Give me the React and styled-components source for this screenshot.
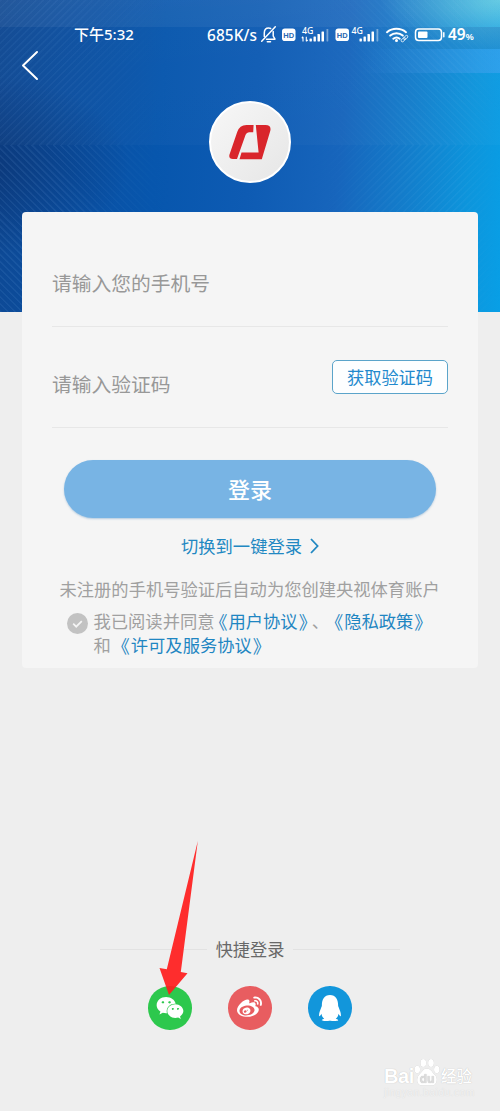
import React from "react";
import styled, { createGlobalStyle } from "styled-components";
import { FaWeixin, FaWeibo, FaQq } from "react-icons/fa";

const Global = createGlobalStyle`
  *, *::before, *::after { box-sizing: border-box; }
  body {
    margin: 0;
    background: #eeeeee;
    font-family: "Noto Sans", "Noto Sans CJK SC", sans-serif;
  }
  button { font: inherit; border: 0; padding: 0; background: none; }
`;

const Screen = styled.main`
  position: relative;
  width: 500px;
  height: 1111px;
  overflow: hidden;
  background: #eeeeee;
  font-family: "Noto Sans CJK SC", sans-serif;
  display: flex;
  flex-direction: column;
`;

const Hero = styled.header`
  position: relative;
  flex: none;
  height: 312px;
  display: flex;
  flex-direction: column;
  color: #fff;
  background:
    linear-gradient(rgba(255, 255, 255, 0.06), rgba(255, 255, 255, 0.05)) 0 0 / 100% 27px no-repeat,
    linear-gradient(90deg, transparent 72%, rgba(110, 170, 255, 0.3)) 0 49px / 100% 24px no-repeat,
    linear-gradient(90deg, transparent 70%, rgba(60, 130, 190, 0.4)) 0 27px / 100% 22px no-repeat,
    linear-gradient(rgba(255, 255, 255, 0.03), rgba(255, 255, 255, 0.02)) 0 0 / 100% 145px no-repeat,
    radial-gradient(ellipse 120px 48px at 500px 0, rgba(150, 235, 225, 0.55), transparent),
    radial-gradient(ellipse 150px 90px at -20px 165px, rgba(8, 36, 90, 0.45), transparent),
    linear-gradient(95deg, #0e4791 0%, #0b4e9f 14%, #0756ad 32%, #0e5bb3 50%, #1765bc 67%, #137dcb 80%, #0d95dc 92%, #089fe6 100%);

  &::before {
    content: "";
    position: absolute;
    inset: 0;
    background:
      repeating-linear-gradient(135deg, rgba(150, 200, 255, 0.06) 0 1px, transparent 2px 5px) 0 0 / 250px 145px no-repeat,
      repeating-linear-gradient(45deg, rgba(150, 200, 255, 0.09) 0 1px, transparent 2px 5px) 0 145px / 250px 167px no-repeat,
      repeating-linear-gradient(45deg, rgba(150, 210, 255, 0.05) 0 1px, transparent 2px 5px) 250px 0 / 250px 145px no-repeat,
      repeating-linear-gradient(135deg, rgba(150, 210, 255, 0.06) 0 1px, transparent 2px 5px) 250px 145px / 250px 167px no-repeat;
    mask-image: linear-gradient(90deg, #000 0, #000 12%, transparent 34%, transparent 62%, #000 82%, #000 92%, transparent);
  }
`;

const StatusBar = styled.div`
  position: relative;
  height: 27px;
  margin-top: 21px;
  padding: 0 24px 0 74px;
  display: flex;
  align-items: center;
  font: 500 15.4px/27px "Noto Sans", "Noto Sans CJK SC", sans-serif;
`;

const Clock = styled.span`
  width: 133px;
  font-size: 15px;
`;

const Speed = styled.span`
  width: 53px;
  padding-top: 1px;
  letter-spacing: 0.1px;
`;

const StatusIcons = styled.svg`
  flex: none;
  width: 187px;
  height: 27px;
`;

const Percent = styled.span`
  margin-left: 1px;
  padding-top: 1px;
  white-space: nowrap;
  font-weight: 600;
  small { font-size: 9.5px; }
`;

const BackButton = styled.button`
  position: relative;
  width: 20px;
  height: 34px;
  margin-left: 20px;
  display: flex;
  align-items: center;
  justify-content: center;
`;

const Logo = styled.div`
  position: relative;
  width: 82px;
  height: 82px;
  margin: 19px 0 0 209px;
  border: 2.5px solid #fff;
  border-radius: 50%;
  background: linear-gradient(135deg, #f7f7f7, #e6e6e6);
  display: grid;
  place-items: center;
`;

const Card = styled.section`
  position: relative;
  flex: none;
  height: 456px;
  margin: -100px 22px 0;
  padding: 0 30px;
  border-radius: 4px;
  background: #f5f5f5;
  display: flex;
  flex-direction: column;
`;

const Field = styled.label`
  display: flex;
  justify-content: space-between;
  height: ${(p) => p.$height}px;
  padding-top: ${(p) => p.$top}px;
  border-bottom: 1px solid #e7e7e7;
`;

const Placeholder = styled.span`
  font-size: 19.75px;
  line-height: 30px;
  color: #989898;
`;

const CodeButton = styled.button`
  width: 116px;
  height: 34px;
  margin-top: -9px;
  border: 1px solid #5ba4ca;
  border-radius: 5px;
  background: #fdfeff;
  color: #2289cd;
  font-size: 17.2px;
  line-height: 32px;
`;

const LoginButton = styled.button`
  height: 58px;
  margin: 32px 12px 0;
  border-radius: 29px;
  background: #78b4e4;
  box-shadow: 0 1px 2px rgba(80, 140, 190, 0.4);
  color: #fff;
  font-size: 22px;
  font-weight: 500;
  line-height: 56px;
  padding-bottom: 2px;
`;

const SwitchLink = styled.a`
  align-self: center;
  margin-top: 15px;
  height: 26px;
  display: flex;
  align-items: center;
  gap: 8px;
  color: #2288c2;
  font-size: 17.3px;
  line-height: 26px;
`;

const Notice = styled.p`
  margin: 17px 0 0 7.5px;
  color: #a0a0a0;
  font-size: 17.3px;
  line-height: 26px;
  white-space: nowrap;
`;

const Agreement = styled.div`
  display: flex;
  align-items: flex-start;
  gap: 5.5px;
  margin: 7px -10px 0 15px;
  color: #a0a0a0;
  font-size: 17.3px;
  line-height: 24px;
  white-space: nowrap;
`;

const CheckIcon = styled.svg`
  flex: none;
  width: 21px;
  height: 21px;
  margin-top: 4px;
`;

const AgreementLine = styled.div`
  display: flex;
  align-items: center;
`;

const Policy = styled.a`
  display: flex;
  margin-left: ${(p) => p.$gap || 0}px;
  color: #1f86c2;
`;

const Bracket = styled.span`
  width: 14px;
  padding: 0 1px;
  font-size: 18px;
  font-feature-settings: "halt";
  text-align: ${(p) => (p.$close ? "left" : "right")};
`;

const Comma = styled.span`
  width: 17px;
  font-feature-settings: "halt";
`;

const QuickTitle = styled.div`
  margin: 268px 100px 0;
  height: 26px;
  display: flex;
  align-items: center;
  gap: 9px;
  color: #686868;
  font-size: 17.2px;
  line-height: 26px;
  white-space: nowrap;

  &::before,
  &::after {
    content: "";
    flex: 1;
    height: 1px;
    background: #e2e2e2;
  }
`;

const Socials = styled.nav`
  margin: 24px 0 0 148px;
  display: flex;
  gap: 36px;
`;

const Social = styled.button`
  width: 43.5px;
  height: 43.5px;
  margin-right: 0.5px;
  border-radius: 50%;
  display: grid;
  place-items: center;
  color: #fff;
  font-size: ${(p) => p.$size}px;
  background: ${(p) => p.$color};
  svg { display: block; }
`;

const Pointer = styled.svg`
  position: absolute;
  left: 155px;
  top: 838px;
  width: 46px;
  height: 160px;
  pointer-events: none;
`;

const Watermark = styled.div`
  position: absolute;
  left: 384px;
  top: 1056px;
  width: 95px;
  color: #fff;
  text-shadow: 0 0 1px #b4b4b4;
  pointer-events: none;
`;

const WatermarkBrand = styled.div`
  display: flex;
  align-items: flex-end;
  height: 31px;
`;

const WatermarkLatin = styled.span`
  width: 30px;
  font: 700 20px/22px "Liberation Sans", sans-serif;
  letter-spacing: -0.4px;
`;

const WatermarkHan = styled.span`
  margin-left: 1px;
  font-size: 15.5px;
  font-weight: 500;
  line-height: 24px;
`;

const Paw = styled.svg`
  width: 26px;
  height: 30px;
  filter: drop-shadow(0 0 0.7px #b8b8b8);
`;

const WatermarkUrl = styled.div`
  color: #f2f2f2;
  font: 10px/12px "Liberation Sans", sans-serif;
  letter-spacing: 0.6px;
  text-shadow: 0 0 1px #d2d2d2;
`;

const Signal = ({ x }) => (
  <g fill="#fff">
    <rect x={x} y="17.5" width="2.4" height="3" rx="0.4" />
    <rect x={x + 4} y="15.5" width="2.4" height="5" rx="0.4" />
    <rect x={x + 8} y="13" width="2.5" height="7.5" rx="0.4" />
    <rect x={x + 12} y="10.5" width="2.5" height="10" rx="0.4" />
    <rect x={x + 17} y="8" width="1.8" height="12.5" rx="0.4" opacity="0.4" />
  </g>
);

const Hd = ({ x }) => (
  <g>
    <rect x={x} y="7.5" width="13.5" height="12.5" rx="2.8" fill="#fff" />
    <text x={x + 6.75} y="16.6" textAnchor="middle" fontFamily="Liberation Sans, sans-serif" fontSize="7.5" fontWeight="700" fill="#2b68b2">HD</text>
  </g>
);

const StatusGlyphs = () => (
  <StatusIcons viewBox="0 0 187 27">
    <g fill="none" stroke="#fff" strokeWidth="1.5" strokeLinecap="round" strokeLinejoin="round">
      <path d="M4.3 15.5V12c0-3 1.7-5 4.4-5 .8 0 1.4.2 2 .5M13.2 10.5V15l1.8 3.2H6.5" />
      <path d="M15.3 5.8 1.7 20.2" />
      <path d="M7.3 20.8h3.2" />
    </g>
    <Hd x={22} />
    <text x="42" y="12.8" fontFamily="Noto Sans, sans-serif" fontSize="8.8" fontWeight="500" fill="#fff">4G</text>
    <path d="M43 16v4.5M41.8 17.3 43 15.6M46.3 15.7v4.6M46.3 20.4l1.5-1.6" stroke="#fff" strokeWidth="1.1" fill="none" />
    <Signal x={49.5} />
    <Hd x={75.5} />
    <text x="91.5" y="12.8" fontFamily="Noto Sans, sans-serif" fontSize="8.8" fontWeight="500" fill="#fff">4G</text>
    <Signal x={99.5} />
    <g fill="none" stroke="#fff" strokeWidth="2" strokeLinecap="round">
      <path d="M127 11.2c5.3-4.6 13.7-4.6 19 0" />
      <path d="M130.2 14.6c3.6-3.1 9-3.1 12.6 0" />
      <path d="M133.3 17.7c1.9-1.5 4.5-1.5 6.4 0" />
    </g>
    <circle cx="136.5" cy="19.6" r="1.5" fill="#fff" />
    <g fill="none" stroke="#fff" strokeWidth="0.9" opacity="0.85">
      <ellipse cx="143.3" cy="18.7" rx="2.6" ry="1.4" transform="rotate(-45 143.3 18.7)" />
      <ellipse cx="145.7" cy="16.5" rx="2.6" ry="1.4" transform="rotate(-45 145.7 16.5)" />
    </g>
    <rect x="155.5" y="8" width="26" height="11.5" rx="3.2" fill="none" stroke="#fff" strokeWidth="1.5" />
    <rect x="158" y="10.5" width="9.5" height="6.5" rx="1" fill="#fff" />
    <path d="M183.8 11.8v4" stroke="#fff" strokeWidth="1.5" strokeLinecap="round" />
  </StatusIcons>
);

export default function App() {
  return (
    <Screen>
      <Global />
      <Hero>
        <StatusBar>
          <Clock>下午5:32</Clock>
          <Speed>685K/s</Speed>
          <StatusGlyphs />
          <Percent>49<small>%</small></Percent>
        </StatusBar>
        <BackButton aria-label="返回">
          <svg width="20" height="32" viewBox="0 0 20 32" fill="none" stroke="#fff" strokeWidth="2" strokeLinecap="round" strokeLinejoin="round">
            <path d="M17 3 3 16.5 17 30" />
          </svg>
        </BackButton>
        <Logo>
          <svg width="42" height="36" viewBox="0 0 42 36" fill="#d9252b">
            <path d="M17.5 1H24.6L24.2 8.2H20Q17.6 8.2 16.6 10.8L8 35H4Q-.7 35 .5 30.4L8.2 8Q10.5 1 17.5 1Z" />
            <path d="M26.8 1H36.5Q43 1 41.1 7.5L32.8 35.2H10.5L12.5 28.6H29.6Z" />
          </svg>
        </Logo>
      </Hero>

      <Card>
        <Field $height={115} $top={56}>
          <Placeholder>请输入您的手机号</Placeholder>
        </Field>
        <Field $height={101} $top={42}>
          <Placeholder>请输入验证码</Placeholder>
          <CodeButton>获取验证码</CodeButton>
        </Field>
        <LoginButton>登录</LoginButton>
        <SwitchLink>
          切换到一键登录
          <svg width="9" height="16" viewBox="0 0 9 16" fill="none" stroke="#2288c2" strokeWidth="1.8">
            <path d="M1 1 7.6 8 1 15" />
          </svg>
        </SwitchLink>
        <Notice>未注册的手机号验证后自动为您创建央视体育账户</Notice>
        <Agreement>
          <CheckIcon viewBox="0 0 21 21">
            <circle cx="10.5" cy="10.5" r="10.5" fill="#c2c2c2" />
            <path d="m6.2 10.7 3 3 5.6-5.6" fill="none" stroke="#f5f5f5" strokeWidth="1.7" />
          </CheckIcon>
          <div>
            <AgreementLine>
              我已阅读并同意
              <Policy>
                <Bracket>《</Bracket>用户协议<Bracket $close>》</Bracket>
              </Policy>
              <Comma>、</Comma>
              <Policy $gap={1.5}>
                <Bracket>《</Bracket>隐私政策<Bracket $close>》</Bracket>
              </Policy>
            </AgreementLine>
            <AgreementLine>
              和
              <Policy $gap={6}>
                <Bracket>《</Bracket>许可及服务协议<Bracket $close>》</Bracket>
              </Policy>
            </AgreementLine>
          </div>
        </Agreement>
      </Card>

      <QuickTitle>快捷登录</QuickTitle>
      <Socials>
        <Social $color="#2dc84d" $size={28} aria-label="微信"><FaWeixin /></Social>
        <Social $color="#e85d60" $size={25} aria-label="微博"><FaWeibo /></Social>
        <Social $color="#1296db" $size={26} aria-label="QQ"><FaQq /></Social>
      </Socials>

      <Pointer viewBox="155 838 46 160">
        <path d="M197.8 841 180.8 972 187.5 973.3 169 995 159.5 968 166.8 969.3Z" fill="#ff1c1c" fillOpacity="0.92" />
      </Pointer>

      <Watermark>
        <WatermarkBrand>
          <WatermarkLatin>Bai</WatermarkLatin>
          <Paw viewBox="0 0 26 30">
            <g fill="#fff">
              <ellipse cx="3.3" cy="12.5" rx="2.8" ry="3.8" />
              <ellipse cx="9.3" cy="6" rx="2.9" ry="4.1" />
              <ellipse cx="17" cy="6" rx="2.9" ry="4.1" />
              <ellipse cx="22.8" cy="12.5" rx="2.8" ry="3.8" />
              <path d="M13 11.5c4 0 5 4 8 6.5s2.5 10.5-3 10.5H8c-5.5 0-6-7.5-3-10.5s4-6.5 8-6.5Z" />
            </g>
            <text x="13" y="26" textAnchor="middle" fontFamily="Liberation Sans, sans-serif" fontWeight="700" fontSize="12" fill="#dcdcdc">du</text>
          </Paw>
          <WatermarkHan>经验</WatermarkHan>
        </WatermarkBrand>
        <WatermarkUrl>jingyan.baidu.com</WatermarkUrl>
      </Watermark>
    </Screen>
  );
}
